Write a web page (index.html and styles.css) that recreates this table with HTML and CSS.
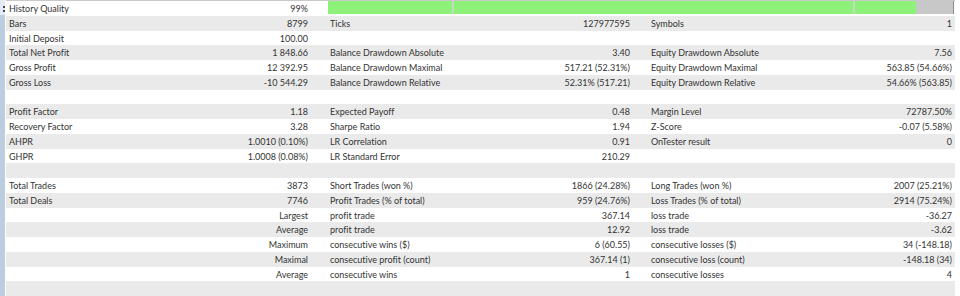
FILE: index.html
```html
<!DOCTYPE html>
<html>
<head>
<meta charset="utf-8">
<link rel="stylesheet" href="styles.css">
</head>
<body>
<div class="app">
  <div class="strip"><div class="strip-top"><span class="dot"></span><span class="dot"></span></div></div>
  <div class="report">
    <div class="row">
      <div class="grp g1"><span class="lbl">History Quality</span><span class="val">99%</span></div>
      <div class="bar">
        <span class="seg green s1"></span><span class="seg div"></span><span class="seg green s2"></span><span class="seg div"></span><span class="seg green s3"></span><span class="seg grey s4"></span><span class="seg end"></span>
      </div>
    </div>
    <div class="row">
      <div class="grp g1"><span class="lbl">Bars</span><span class="val">8799</span></div>
      <div class="grp g2"><span class="lbl">Ticks</span><span class="val">127977595</span></div>
      <div class="grp g3"><span class="lbl">Symbols</span><span class="val">1</span></div>
    </div>
    <div class="row">
      <div class="grp g1"><span class="lbl">Initial Deposit</span><span class="val">100.00</span></div>
      <div class="grp g2"><span class="lbl"></span><span class="val"></span></div>
      <div class="grp g3"><span class="lbl"></span><span class="val"></span></div>
    </div>
    <div class="row">
      <div class="grp g1"><span class="lbl">Total Net Profit</span><span class="val">1 848.66</span></div>
      <div class="grp g2"><span class="lbl">Balance Drawdown Absolute</span><span class="val">3.40</span></div>
      <div class="grp g3"><span class="lbl">Equity Drawdown Absolute</span><span class="val">7.56</span></div>
    </div>
    <div class="row">
      <div class="grp g1"><span class="lbl">Gross Profit</span><span class="val">12 392.95</span></div>
      <div class="grp g2"><span class="lbl">Balance Drawdown Maximal</span><span class="val">517.21 (52.31%)</span></div>
      <div class="grp g3"><span class="lbl">Equity Drawdown Maximal</span><span class="val">563.85 (54.66%)</span></div>
    </div>
    <div class="row">
      <div class="grp g1"><span class="lbl">Gross Loss</span><span class="val">-10 544.29</span></div>
      <div class="grp g2"><span class="lbl">Balance Drawdown Relative</span><span class="val">52.31% (517.21)</span></div>
      <div class="grp g3"><span class="lbl">Equity Drawdown Relative</span><span class="val">54.66% (563.85)</span></div>
    </div>
    <div class="row"></div>
    <div class="row">
      <div class="grp g1"><span class="lbl">Profit Factor</span><span class="val">1.18</span></div>
      <div class="grp g2"><span class="lbl">Expected Payoff</span><span class="val">0.48</span></div>
      <div class="grp g3"><span class="lbl">Margin Level</span><span class="val">72787.50%</span></div>
    </div>
    <div class="row">
      <div class="grp g1"><span class="lbl">Recovery Factor</span><span class="val">3.28</span></div>
      <div class="grp g2"><span class="lbl">Sharpe Ratio</span><span class="val">1.94</span></div>
      <div class="grp g3"><span class="lbl">Z-Score</span><span class="val">-0.07 (5.58%)</span></div>
    </div>
    <div class="row">
      <div class="grp g1"><span class="lbl">AHPR</span><span class="val">1.0010 (0.10%)</span></div>
      <div class="grp g2"><span class="lbl">LR Correlation</span><span class="val">0.91</span></div>
      <div class="grp g3"><span class="lbl">OnTester result</span><span class="val">0</span></div>
    </div>
    <div class="row">
      <div class="grp g1"><span class="lbl">GHPR</span><span class="val">1.0008 (0.08%)</span></div>
      <div class="grp g2"><span class="lbl">LR Standard Error</span><span class="val">210.29</span></div>
      <div class="grp g3"><span class="lbl"></span><span class="val"></span></div>
    </div>
    <div class="row"></div>
    <div class="row">
      <div class="grp g1"><span class="lbl">Total Trades</span><span class="val">3873</span></div>
      <div class="grp g2"><span class="lbl">Short Trades (won %)</span><span class="val">1866 (24.28%)</span></div>
      <div class="grp g3"><span class="lbl">Long Trades (won %)</span><span class="val">2007 (25.21%)</span></div>
    </div>
    <div class="row">
      <div class="grp g1"><span class="lbl">Total Deals</span><span class="val">7746</span></div>
      <div class="grp g2"><span class="lbl">Profit Trades (% of total)</span><span class="val">959 (24.76%)</span></div>
      <div class="grp g3"><span class="lbl">Loss Trades (% of total)</span><span class="val">2914 (75.24%)</span></div>
    </div>
    <div class="row">
      <div class="grp g1"><span class="lbl"></span><span class="val">Largest</span></div>
      <div class="grp g2"><span class="lbl">profit trade</span><span class="val">367.14</span></div>
      <div class="grp g3"><span class="lbl">loss trade</span><span class="val">-36.27</span></div>
    </div>
    <div class="row">
      <div class="grp g1"><span class="lbl"></span><span class="val">Average</span></div>
      <div class="grp g2"><span class="lbl">profit trade</span><span class="val">12.92</span></div>
      <div class="grp g3"><span class="lbl">loss trade</span><span class="val">-3.62</span></div>
    </div>
    <div class="row">
      <div class="grp g1"><span class="lbl"></span><span class="val">Maximum</span></div>
      <div class="grp g2"><span class="lbl">consecutive wins ($)</span><span class="val">6 (60.55)</span></div>
      <div class="grp g3"><span class="lbl">consecutive losses ($)</span><span class="val">34 (-148.18)</span></div>
    </div>
    <div class="row">
      <div class="grp g1"><span class="lbl"></span><span class="val">Maximal</span></div>
      <div class="grp g2"><span class="lbl">consecutive profit (count)</span><span class="val">367.14 (1)</span></div>
      <div class="grp g3"><span class="lbl">consecutive loss (count)</span><span class="val">-148.18 (34)</span></div>
    </div>
    <div class="row">
      <div class="grp g1"><span class="lbl"></span><span class="val">Average</span></div>
      <div class="grp g2"><span class="lbl">consecutive wins</span><span class="val">1</span></div>
      <div class="grp g3"><span class="lbl">consecutive losses</span><span class="val">4</span></div>
    </div>
    <div class="row"></div>
  </div>
</div>
</body>
</html>
```

FILE: styles.css
```css
html, body {
  margin: 0;
  padding: 0;
  background: #ffffff;
}
body {
  font-family: Lato, "Open Sans", sans-serif;
  font-size: 9px;
  font-variant-ligatures: none;
  color: #333333;
  width: 960px;
  height: 296px;
  overflow: hidden;
}
.app {
  display: flex;
  height: 296px;
}
.strip {
  width: 5px;
  background: #bccde0;
  margin-right: 1px;
  flex: none;
}
.strip-top {
  height: 15px;
  background: #e4ebf3;
  display: flex;
  flex-direction: column;
  align-items: flex-end;
  padding-top: 6px;
  box-sizing: border-box;
  gap: 2px;
}
.dot {
  display: block;
  width: 2px;
  height: 2px;
  background: #3b4a5c;
}
.report {
  width: 949px;
  border-top: 1px solid #c9c9c9;
  display: flex;
  flex-direction: column;
}
.row {
  height: 14.75px;
  display: flex;
  line-height: 15px;
  white-space: nowrap;
}
.row:nth-child(even) {
  background: #eaeaea;
}
.grp {
  display: flex;
  justify-content: space-between;
  box-sizing: border-box;
  padding-left: 3px;
}
.g1 { width: 321px; padding-right: 19px; }
.g2 { width: 321px; padding-right: 18px; }
.g3 { width: 307px; padding-right: 3px; }
.bar {
  display: flex;
  margin-left: 1px;
  height: 13px;
  width: 626px;
}
.seg { display: block; height: 13px; }
.green { background: #8ef27a; }
.s1 { width: 124px; }
.s2 { width: 399px; }
.s3 { width: 61px; }
.div { width: 2px; background: #c3dcc0; }
.s4 { width: 37px; background: #c8c8c8; }
.end { width: 1px; background: #8c8c8c; }
```
